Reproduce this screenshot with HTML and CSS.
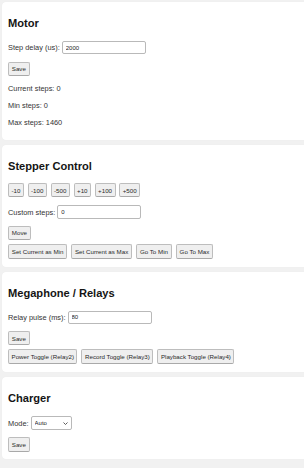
FILE: index.html
```html
<!DOCTYPE html>
<html lang="en">
<head>
<meta charset="utf-8">
<title>Controller</title>
<link rel="stylesheet" href="styles.css">
</head>
<body>
<div class="page">
  <section class="card card-motor">
    <h2>Motor</h2>
    <div class="row">
      <label>Step delay (us):</label>
      <input class="field" type="text" value="2000">
    </div>
    <div class="actions"><button>Save</button></div>
    <p class="stat first">Current steps: 0</p>
    <p class="stat">Min steps: 0</p>
    <p class="stat">Max steps: 1460</p>
  </section>

  <section class="card card-stepper">
    <h2>Stepper Control</h2>
    <div class="btns steps">
      <button>-10</button><button>-100</button><button>-500</button><button>+10</button><button>+100</button><button>+500</button>
    </div>
    <div class="row custom">
      <label>Custom steps:</label>
      <input class="field" type="text" value="0">
    </div>
    <div class="actions"><button>Move</button></div>
    <div class="btns limits">
      <button>Set Current as Min</button><button>Set Current as Max</button><button>Go To Min</button><button>Go To Max</button>
    </div>
  </section>

  <section class="card card-relays">
    <h2>Megaphone / Relays</h2>
    <div class="row">
      <label>Relay pulse (ms):</label>
      <input class="field" type="text" value="80">
    </div>
    <div class="actions"><button>Save</button></div>
    <div class="btns toggles">
      <button>Power Toggle (Relay2)</button><button>Record Toggle (Relay3)</button><button>Playback Toggle (Relay4)</button>
    </div>
  </section>

  <section class="card card-charger">
    <h2>Charger</h2>
    <div class="row mode">
      <label>Mode:</label>
      <span class="select-wrap">
        <select class="select"><option>Auto</option><option>On</option><option>Off</option></select>
        <svg class="chev" viewBox="0 0 10 6" width="5" height="3"><path d="M1 1l4 4 4-4" fill="none" stroke="#333" stroke-width="1.6"/></svg>
      </span>
    </div>
    <div class="actions"><button>Save</button></div>
  </section>
</div>
</body>
</html>
```

FILE: styles.css
```css
html, body {
  margin: 0;
  padding: 0;
  background: #f1f1f1;
}
body {
  font-family: "Liberation Sans", Arial, sans-serif;
  font-size: 7.4px;
  color: #333;
}
.page {
  padding: 2px 0 0 2px;
}
.card {
  background: #fff;
  border-radius: 4px 0 0 4px;
  padding: 6px 6px 8px;
  margin-bottom: 5.5px;
  box-shadow: 0 0 1px rgba(0,0,0,0.06);
}
.card-motor { padding-bottom: 12.6px; }
.card-relays { padding-bottom: 7.5px; }
.card-charger { padding-bottom: 7px; }
h2 {
  margin: 8.5px 0 0;
  font-size: 11.1px;
  line-height: 13px;
  font-weight: bold;
  color: #151515;
}
.card-relays h2 { margin-top: 9px; }
.card-charger h2 { margin-top: 8.8px; }
.row {
  display: flex;
  align-items: center;
  gap: 2px;
  margin-top: 11.4px;
}
.row label { line-height: 9px; color: #333; }
.field {
  width: 84px;
  height: 13.6px;
  box-sizing: border-box;
  border: 1px solid #b9b9b9;
  border-radius: 2px;
  padding: 0 3px;
  font-family: "Liberation Sans", Arial, sans-serif;
  font-size: 6px;
  color: #222;
  background: #fff;
  outline: none;
}
.actions { margin-top: 7.4px; display: flex; }
button {
  font-family: "Liberation Sans", Arial, sans-serif;
  font-size: 6.2px;
  line-height: 7.5px;
  color: #2a2a2a;
  background: #efefef;
  border: 1px solid #bdbdbd;
  border-bottom-color: #a9a9a9;
  border-radius: 2px;
  padding: 2.4px 2.8px;
  margin: 0;
}
.stat { margin: 8.2px 0 0; line-height: 8.5px; }
.stat.first { margin-top: 9px; }
.btns {
  display: flex;
  flex-wrap: wrap;
  gap: 4.5px;
}
.btns.steps { margin-top: 10.5px; gap: 3.6px; }
.btns.steps button { padding-left: 2.5px; padding-right: 2.5px; }
.row.custom { margin-top: 8px; }
.card-stepper .actions { margin-top: 7px; }
.btns.limits { margin-top: 4px; gap: 4px; }
.card-relays .row { margin-top: 10.5px; }
.card-relays .actions { margin-top: 7px; }
.btns.toggles { margin-top: 3.5px; gap: 4px; }
.btns.toggles button { padding: 3px 2.5px; }
.row.mode { margin-top: 10.7px; }
.card-charger .actions { margin-top: 7px; }
.select-wrap { position: relative; display: inline-block; }
.select {
  appearance: none;
  -webkit-appearance: none;
  width: 41px;
  height: 14.5px;
  box-sizing: border-box;
  border: 1px solid #b9b9b9;
  border-radius: 2px;
  padding: 0 3px;
  font-family: "Liberation Sans", Arial, sans-serif;
  font-size: 6px;
  color: #222;
  background: #fff;
  outline: none;
  display: block;
}
.chev {
  position: absolute;
  right: 4px;
  top: 6px;
}
```
